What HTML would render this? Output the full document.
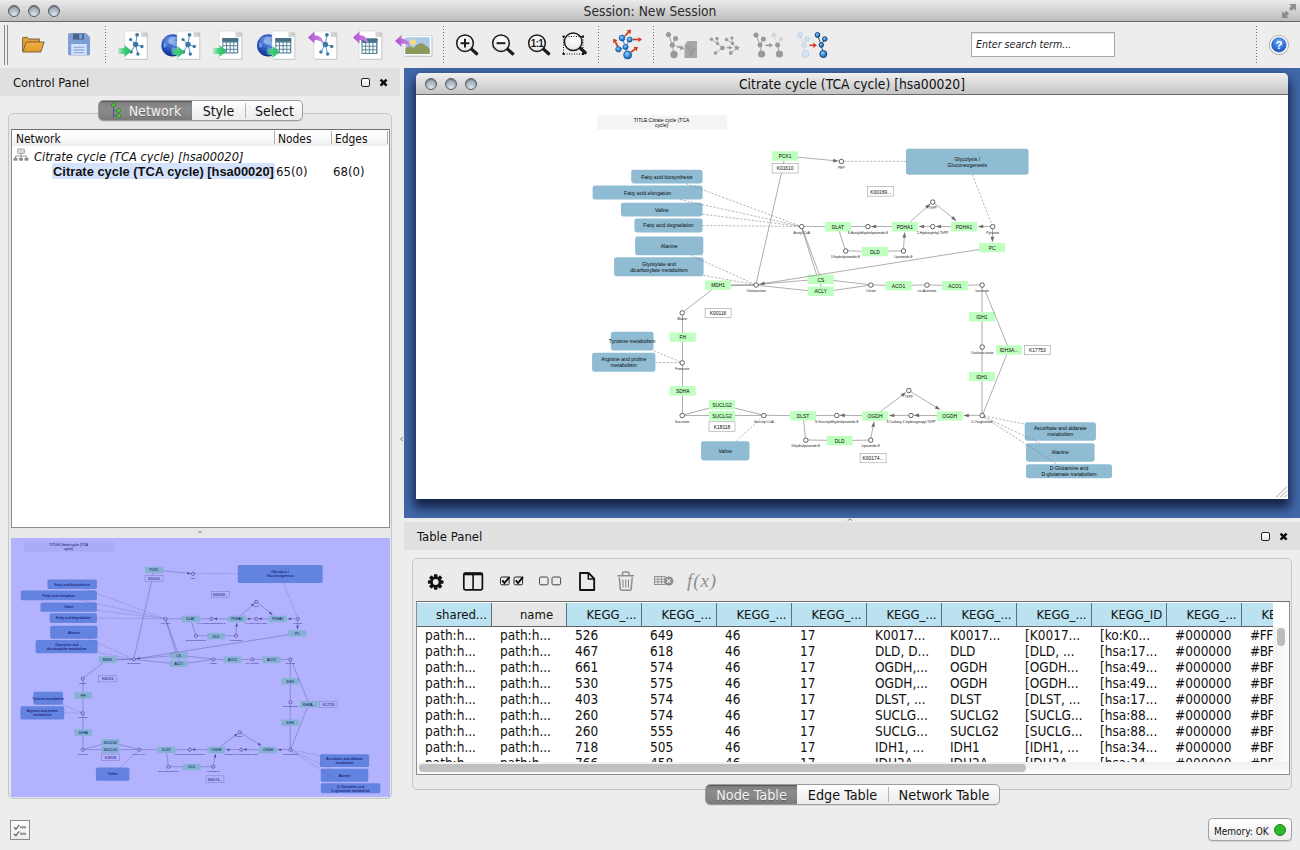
<!DOCTYPE html><html><head><meta charset="utf-8"><title>Session: New Session</title><style>
*{box-sizing:border-box;margin:0;padding:0}
html,body{width:1300px;height:850px;overflow:hidden;background:#ededed;font-family:"DejaVu Sans Condensed","DejaVu Sans","Liberation Sans",sans-serif;font-size:13px;color:#111}
.abs{position:absolute}
#titlebar{left:0;top:0;width:1300px;height:22px;background:linear-gradient(#ebebeb,#d6d6d6 45%,#bcbcbc);border-bottom:1px solid #686868;border-radius:4px 4px 0 0}
#titlebar .t{position:absolute;left:0;width:1300px;top:3px;text-align:center;font-size:13.7px;color:#2a2a2a}
.tl{position:absolute;width:12px;height:12px;border-radius:50%;background:radial-gradient(circle at 50% 90%,#e3e9ee 0%,#b7c2cd 40%,#8a96a4 100%);border:1px solid #565d68;box-shadow:inset 0 1px 1px rgba(60,70,80,.5)}
.band{background:#e0e0e0}
.sepv{position:absolute;width:1px;border-left:1px dotted #777}
.seg{position:absolute;font-size:14px;height:21px;border:1px solid #9c9c9c;border-radius:5px;background:linear-gradient(#ffffff,#f4f4f4 50%,#ececec);box-shadow:0 1px 0 rgba(0,0,0,.08);overflow:hidden}
.seg .it{position:absolute;top:0;height:19px;line-height:20px;text-align:center;font-size:inherit;color:#111}
.seg .sel{background:linear-gradient(#7c7c7c,#8b8b8b 35%,#878787 65%,#7a7a7a);color:#f4f4f4;text-shadow:0 1px 0 rgba(0,0,0,.25);box-shadow:inset 0 1px 1px rgba(0,0,0,.3)}
.seg .dv{position:absolute;top:2px;width:1px;height:15px;background:#b5b5b5}
.pane{position:absolute;border:1px solid #c6c6c6;border-radius:5px;background:#e8e8e8}
.row{position:absolute;font-size:13px;white-space:nowrap;line-height:16px;height:16px}
.hc{position:absolute;top:0;height:24px;line-height:24px;font-size:13px;text-align:center;background:#bae2f0;border-right:1px solid #58737f;padding-left:15px;white-space:nowrap;overflow:hidden}
</style></head><body>
<div id="titlebar" class="abs"><div class="tl" style="left:8px;top:5px"></div><div class="tl" style="left:28px;top:5px"></div><div class="tl" style="left:48px;top:5px"></div><div class="t">Session: New Session</div><svg class="abs" style="left:1281px;top:3px" width="16" height="16" viewBox="0 0 16 16"><g fill="#8e8e8e"><path d="M15 1 L15 7.8 L12.9 5.7 L10.6 8 L8 5.4 L10.3 3.1 L8.2 1 Z"/><path d="M1 15 L1 8.2 L3.1 10.3 L5.4 8 L8 10.6 L5.7 12.9 L7.8 15 Z"/></g></svg></div>
<div class="abs" style="left:4px;top:25px;width:1px;height:40px;background:#8a8a8a"></div><div class="abs" style="left:7px;top:25px;width:1px;height:40px;background:#8a8a8a"></div>
<svg class="abs" style="left:0;top:0" width="1300" height="70" viewBox="0 0 1300 70"><defs><linearGradient id="gg" x1="0" x2="1" y1="0" y2="0"><stop offset="0" stop-color="#3fd07a" stop-opacity="0.25"/><stop offset="0.45" stop-color="#3fcf78"/><stop offset="1" stop-color="#2fb366"/></linearGradient><linearGradient id="pg" x1="0" x2="1" y1="0" y2="0"><stop offset="0" stop-color="#b24fd8"/><stop offset="1" stop-color="#c98ae0"/></linearGradient><radialGradient id="gl" cx="0.4" cy="0.35" r="0.75"><stop offset="0" stop-color="#5b8de0"/><stop offset="0.55" stop-color="#1f4bb4"/><stop offset="1" stop-color="#071e78"/></radialGradient><radialGradient id="lg" cx="0.5" cy="0.35" r="0.7"><stop offset="0" stop-color="#ffffff"/><stop offset="0.7" stop-color="#ececec"/><stop offset="1" stop-color="#c8c8c8"/></radialGradient><radialGradient id="bn" cx="0.4" cy="0.35" r="0.7"><stop offset="0" stop-color="#8fd0ff"/><stop offset="0.6" stop-color="#2f86d6"/><stop offset="1" stop-color="#0f4f9a"/></radialGradient><radialGradient id="hp" cx="0.5" cy="0.3" r="0.8"><stop offset="0" stop-color="#7db4f5"/><stop offset="0.6" stop-color="#2a6fd6"/><stop offset="1" stop-color="#1548a8"/></radialGradient><linearGradient id="fo" x1="0" x2="0" y1="0" y2="1"><stop offset="0" stop-color="#f7b040"/><stop offset="1" stop-color="#e09a2c"/></linearGradient></defs><line x1="105.5" y1="26" x2="105.5" y2="63.5" stroke="#777" stroke-width="1" stroke-dasharray="1 2"/><line x1="443.5" y1="26" x2="443.5" y2="63.5" stroke="#777" stroke-width="1" stroke-dasharray="1 2"/><line x1="598.5" y1="26" x2="598.5" y2="63.5" stroke="#777" stroke-width="1" stroke-dasharray="1 2"/><line x1="653.5" y1="26" x2="653.5" y2="63.5" stroke="#777" stroke-width="1" stroke-dasharray="1 2"/><line x1="1256.5" y1="26" x2="1256.5" y2="63.5" stroke="#777" stroke-width="1" stroke-dasharray="1 2"/><path d="M22.6 51 V38.2 Q22.6 37.4 23.4 37.4 H27.4 L28.6 39 H39.4 V42" fill="#e8a030" stroke="#6a5a40" stroke-width="0.9"/><path d="M22.8 52 L26.2 42 H44.2 L40.8 52 Z" fill="url(#fo)" stroke="#6a5a40" stroke-width="0.9" stroke-linejoin="round"/><path d="M69.5 33.5 H86 L89.6 37.2 V54 Q89.6 55 88.6 55 H69.5 Q68.5 55 68.5 54 V34.5 Q68.5 33.5 69.5 33.5 Z" fill="#7c9fd6" stroke="#6a86b8" stroke-width="0.6"/><rect x="73" y="33.6" width="11" height="6" fill="#4b6288"/><rect x="79.2" y="34.2" width="3" height="4.4" fill="#7c9fd6"/><rect x="71.2" y="44" width="15.6" height="11" fill="#d4e2fc"/><path d="M73.5 47.3 H84.5 M73.5 50 H84.5 M73.5 52.7 H84.5" stroke="#8fb0e2" stroke-width="1.3"/><path d="M125.39999999999999 32.5 H147.9 V59.9 H125.39999999999999 Z" fill="#000" fill-opacity="0.16"/><path d="M124.6 31 H141.1 L147.1 37 V59 H124.6 Z" fill="#fff" stroke="#d0d0d0" stroke-width="0.6"/><path d="M141.1 31 V37 H147.1 Z" fill="#d4d4d4"/><g stroke="#4d9bd6" stroke-width="1"><line x1="135.6" y1="44.5" x2="137.1" y2="34.8"/><line x1="135.6" y1="44.5" x2="130.6" y2="39.5"/><line x1="135.6" y1="44.5" x2="141.9" y2="46.5"/><line x1="135.6" y1="44.5" x2="131.1" y2="52"/><line x1="135.6" y1="44.5" x2="137.9" y2="54"/></g><g fill="#3b79a6"><circle cx="135.6" cy="44.5" r="2.7"/><circle cx="137.1" cy="34.8" r="1.9"/><circle cx="130.6" cy="39.5" r="1.6"/><circle cx="141.9" cy="46.5" r="1.7"/><circle cx="131.1" cy="52" r="1.7"/><circle cx="137.9" cy="54" r="1.7"/></g><path d="M118 48 H124.5 V45 L131.5 51 L124.5 57 V54 H118 Z" fill="url(#gg)"/><circle cx="172.6" cy="45.4" r="11.2" fill="url(#gl)"/><path d="M169.6 37.4 q4 -2 7 0 q-2 2 -1 4 q3 1 3 4 q-3 2 -6 0 q-2 -2 -4 -3 q-1 -3 1 -5z M171.6 47.4 q4 -1 6 2 q0 4 -3 6 q-3 -2 -3 -8z M163.6 42.4 q3 0 3 3 q-1 3 -3 2z" fill="#a8c8f4" fill-opacity="0.55"/><ellipse cx="170.6" cy="39.9" rx="7" ry="4" fill="#fff" fill-opacity="0.13"/><path d="M177.8 32.5 H200.3 V59.9 H177.8 Z" fill="#000" fill-opacity="0.16"/><path d="M177 31 H193.5 L199.5 37 V59 H177 Z" fill="#fff" stroke="#d0d0d0" stroke-width="0.6"/><path d="M193.5 31 V37 H199.5 Z" fill="#d4d4d4"/><g stroke="#4d9bd6" stroke-width="1"><line x1="188" y1="44.5" x2="189.5" y2="34.8"/><line x1="188" y1="44.5" x2="183" y2="39.5"/><line x1="188" y1="44.5" x2="194.3" y2="46.5"/><line x1="188" y1="44.5" x2="183.5" y2="52"/><line x1="188" y1="44.5" x2="190.3" y2="54"/></g><g fill="#3b79a6"><circle cx="188" cy="44.5" r="2.7"/><circle cx="189.5" cy="34.8" r="1.9"/><circle cx="183" cy="39.5" r="1.6"/><circle cx="194.3" cy="46.5" r="1.7"/><circle cx="183.5" cy="52" r="1.7"/><circle cx="190.3" cy="54" r="1.7"/></g><path d="M171 49 H177.5 V46 L184.5 52 L177.5 58 V55 H171 Z" fill="url(#gg)"/><path d="M219.8 32.5 H242.3 V59.9 H219.8 Z" fill="#000" fill-opacity="0.16"/><path d="M219 31 H235.5 L241.5 37 V59 H219 Z" fill="#fff" stroke="#d0d0d0" stroke-width="0.6"/><path d="M235.5 31 V37 H241.5 Z" fill="#d4d4d4"/><rect x="222.3" y="38" width="16" height="15.5" rx="0.8" fill="#56829c"/><rect x="222.3" y="38" width="16" height="3.6" rx="0.8" fill="#4a7088"/><rect x="223.30" y="42.60" width="2.7" height="2.6" fill="#fff"/><rect x="226.95" y="42.60" width="2.7" height="2.6" fill="#fff"/><rect x="230.60" y="42.60" width="2.7" height="2.6" fill="#fff"/><rect x="234.25" y="42.60" width="2.7" height="2.6" fill="#fff"/><rect x="223.30" y="46.20" width="2.7" height="2.6" fill="#fff"/><rect x="226.95" y="46.20" width="2.7" height="2.6" fill="#fff"/><rect x="230.60" y="46.20" width="2.7" height="2.6" fill="#fff"/><rect x="234.25" y="46.20" width="2.7" height="2.6" fill="#fff"/><rect x="223.30" y="49.80" width="2.7" height="2.6" fill="#fff"/><rect x="226.95" y="49.80" width="2.7" height="2.6" fill="#fff"/><rect x="230.60" y="49.80" width="2.7" height="2.6" fill="#fff"/><rect x="234.25" y="49.80" width="2.7" height="2.6" fill="#fff"/><path d="M213 48 H219.5 V45 L226.5 51 L219.5 57 V54 H213 Z" fill="url(#gg)"/><circle cx="268.2" cy="45.4" r="11.2" fill="url(#gl)"/><path d="M265.2 37.4 q4 -2 7 0 q-2 2 -1 4 q3 1 3 4 q-3 2 -6 0 q-2 -2 -4 -3 q-1 -3 1 -5z M267.2 47.4 q4 -1 6 2 q0 4 -3 6 q-3 -2 -3 -8z M259.2 42.4 q3 0 3 3 q-1 3 -3 2z" fill="#a8c8f4" fill-opacity="0.55"/><ellipse cx="266.2" cy="39.9" rx="7" ry="4" fill="#fff" fill-opacity="0.13"/><path d="M272.8 32.5 H295.3 V59.9 H272.8 Z" fill="#000" fill-opacity="0.16"/><path d="M272 31 H288.5 L294.5 37 V59 H272 Z" fill="#fff" stroke="#d0d0d0" stroke-width="0.6"/><path d="M288.5 31 V37 H294.5 Z" fill="#d4d4d4"/><rect x="275.3" y="38" width="16" height="15.5" rx="0.8" fill="#56829c"/><rect x="275.3" y="38" width="16" height="3.6" rx="0.8" fill="#4a7088"/><rect x="276.30" y="42.60" width="2.7" height="2.6" fill="#fff"/><rect x="279.95" y="42.60" width="2.7" height="2.6" fill="#fff"/><rect x="283.60" y="42.60" width="2.7" height="2.6" fill="#fff"/><rect x="287.25" y="42.60" width="2.7" height="2.6" fill="#fff"/><rect x="276.30" y="46.20" width="2.7" height="2.6" fill="#fff"/><rect x="279.95" y="46.20" width="2.7" height="2.6" fill="#fff"/><rect x="283.60" y="46.20" width="2.7" height="2.6" fill="#fff"/><rect x="287.25" y="46.20" width="2.7" height="2.6" fill="#fff"/><rect x="276.30" y="49.80" width="2.7" height="2.6" fill="#fff"/><rect x="279.95" y="49.80" width="2.7" height="2.6" fill="#fff"/><rect x="283.60" y="49.80" width="2.7" height="2.6" fill="#fff"/><rect x="287.25" y="49.80" width="2.7" height="2.6" fill="#fff"/><path d="M266 49 H272.5 V46 L279.5 52 L272.5 58 V55 H266 Z" fill="url(#gg)"/><path d="M314.8 32.5 H337.3 V59.9 H314.8 Z" fill="#000" fill-opacity="0.16"/><path d="M314 31 H330.5 L336.5 37 V59 H314 Z" fill="#fff" stroke="#d0d0d0" stroke-width="0.6"/><path d="M330.5 31 V37 H336.5 Z" fill="#d4d4d4"/><g stroke="#4d9bd6" stroke-width="1"><line x1="325.4" y1="44.5" x2="326.9" y2="34.8"/><line x1="325.4" y1="44.5" x2="320.4" y2="39.5"/><line x1="325.4" y1="44.5" x2="331.7" y2="46.5"/><line x1="325.4" y1="44.5" x2="320.9" y2="52"/><line x1="325.4" y1="44.5" x2="327.7" y2="54"/></g><g fill="#3b79a6"><circle cx="325.4" cy="44.5" r="2.7"/><circle cx="326.9" cy="34.8" r="1.9"/><circle cx="320.4" cy="39.5" r="1.6"/><circle cx="331.7" cy="46.5" r="1.7"/><circle cx="320.9" cy="52" r="1.7"/><circle cx="327.7" cy="54" r="1.7"/></g><path d="M308 37.5 L314.5 31.5 V35.2 C320 34.9 323 38.5 323 44.0 C321 40.5 318 39.9 314.5 40.0 V43.5 Z" fill="url(#pg)"/><path d="M359.8 32.5 H382.3 V59.9 H359.8 Z" fill="#000" fill-opacity="0.16"/><path d="M359 31 H375.5 L381.5 37 V59 H359 Z" fill="#fff" stroke="#d0d0d0" stroke-width="0.6"/><path d="M375.5 31 V37 H381.5 Z" fill="#d4d4d4"/><rect x="361.5" y="38.5" width="16" height="15.5" rx="0.8" fill="#56829c"/><rect x="361.5" y="38.5" width="16" height="3.6" rx="0.8" fill="#4a7088"/><rect x="362.50" y="43.10" width="2.7" height="2.6" fill="#fff"/><rect x="366.15" y="43.10" width="2.7" height="2.6" fill="#fff"/><rect x="369.80" y="43.10" width="2.7" height="2.6" fill="#fff"/><rect x="373.45" y="43.10" width="2.7" height="2.6" fill="#fff"/><rect x="362.50" y="46.70" width="2.7" height="2.6" fill="#fff"/><rect x="366.15" y="46.70" width="2.7" height="2.6" fill="#fff"/><rect x="369.80" y="46.70" width="2.7" height="2.6" fill="#fff"/><rect x="373.45" y="46.70" width="2.7" height="2.6" fill="#fff"/><rect x="362.50" y="50.30" width="2.7" height="2.6" fill="#fff"/><rect x="366.15" y="50.30" width="2.7" height="2.6" fill="#fff"/><rect x="369.80" y="50.30" width="2.7" height="2.6" fill="#fff"/><rect x="373.45" y="50.30" width="2.7" height="2.6" fill="#fff"/><path d="M353 37.5 L359.5 31.5 V35.2 C365 34.9 368 38.5 368 44.0 C366 40.5 363 39.9 359.5 40.0 V43.5 Z" fill="url(#pg)"/><rect x="404.6" y="36.6" width="28" height="20.4" fill="#000" fill-opacity="0.15"/><rect x="403.5" y="35.5" width="28" height="20.4" fill="#fff" stroke="#cfd8e2" stroke-width="0.6"/><rect x="405.3" y="37.3" width="24.4" height="16.8" fill="#a9c9e6"/><circle cx="413" cy="42.3" r="3" fill="#f6d983"/><path d="M405.3 54.1 V48.5 Q409 44.5 413.5 48 Q420 40.5 425 45 Q428 46.5 429.7 49 V54.1 Z" fill="#8c985c"/><path d="M395 41 L401.5 35 V38.7 C407 38.4 410 42 410 47.5 C408 44 405 43.4 401.5 43.5 V47 Z" fill="url(#pg)"/><line x1="471.5" y1="49.1" x2="476.7" y2="53.8" stroke="#1c1c1c" stroke-width="3.2" stroke-linecap="round"/><circle cx="465" cy="43.2" r="8.3" fill="url(#lg)" stroke="#1c1c1c" stroke-width="1.5"/><path d="M460.6 43.2 H469.4 M465 38.8 V47.6" stroke="#1c1c1c" stroke-width="2"/><line x1="507.5" y1="49.1" x2="512.7" y2="53.8" stroke="#1c1c1c" stroke-width="3.2" stroke-linecap="round"/><circle cx="501" cy="43.2" r="8.3" fill="url(#lg)" stroke="#1c1c1c" stroke-width="1.5"/><path d="M496.6 43.2 H505.4" stroke="#1c1c1c" stroke-width="2"/><line x1="543.5" y1="49.1" x2="548.7" y2="53.8" stroke="#1c1c1c" stroke-width="3.2" stroke-linecap="round"/><circle cx="537" cy="43.2" r="8.3" fill="url(#lg)" stroke="#1c1c1c" stroke-width="1.5"/><text x="537" y="47" font-family="'Liberation Sans',sans-serif" font-weight="bold" font-size="10" text-anchor="middle" fill="#1c1c1c" letter-spacing="-0.6">1:1</text><line x1="580.1" y1="48.0" x2="585.3" y2="52.7" stroke="#1c1c1c" stroke-width="3.2" stroke-linecap="round"/><circle cx="573.2" cy="41.8" r="8.8" fill="url(#lg)" stroke="#1c1c1c" stroke-width="1.5"/><rect x="563.5" y="36.5" width="19.5" height="17.5" fill="none" stroke="#111" stroke-width="1" stroke-dasharray="1 1.5"/><rect x="562.5" y="35.5" width="2" height="2" fill="#111"/><rect x="582" y="35.5" width="2" height="2" fill="#111"/><rect x="562.5" y="53" width="2" height="2" fill="#111"/><rect x="582" y="53" width="2" height="2" fill="#111"/><line x1="625" y1="36" x2="628.6" y2="32.1" stroke="#d2341e" stroke-width="1.7"/><polygon points="631,29.5 630.5,33.9 626.6,30.4" fill="#d2341e"/><line x1="633" y1="39.5" x2="638.4" y2="39.5" stroke="#d2341e" stroke-width="1.7"/><polygon points="642,39.5 638.4,42.1 638.4,36.9" fill="#d2341e"/><line x1="618" y1="47" x2="615.2" y2="41.7" stroke="#d2341e" stroke-width="1.7"/><polygon points="613.5,38.5 617.5,40.5 612.9,42.9" fill="#d2341e"/><line x1="631" y1="52" x2="635.1" y2="49.1" stroke="#d2341e" stroke-width="1.7"/><polygon points="638,47 636.6,51.2 633.6,47.0" fill="#d2341e"/><path d="M622 38 L625.5 47 L629.5 39.5 M625.5 47 L618.5 49.5 M625.5 47 L627.5 55" stroke="#2f6fb6" stroke-width="0.9" fill="none"/><circle cx="622" cy="38" r="2.9" fill="url(#bn)" stroke="#174f96" stroke-width="0.7"/><circle cx="629.7" cy="39.5" r="2.6" fill="url(#bn)" stroke="#174f96" stroke-width="0.7"/><circle cx="625.6" cy="47" r="2.6" fill="url(#bn)" stroke="#174f96" stroke-width="0.7"/><circle cx="618.4" cy="49.3" r="2.7" fill="url(#bn)" stroke="#174f96" stroke-width="0.7"/><circle cx="627.6" cy="55" r="4" fill="url(#bn)" stroke="#174f96" stroke-width="0.7"/><g stroke="#9a9a9a" stroke-width="0.9" fill="none"><path d="M668.5 34.5 L672.3 45 L675.5 38.5 M672.3 45 L674 54.5"/></g><circle cx="668.5" cy="34.5" r="2.6" fill="#9a9a9a"/><circle cx="675.6" cy="38.6" r="2.5" fill="#9a9a9a"/><circle cx="672.3" cy="45" r="2.6" fill="#9a9a9a"/><circle cx="674" cy="54.5" r="3.7" fill="#9a9a9a"/><path d="M676.5 46.2 L681 47.5" stroke="#9a9a9a" stroke-width="1.6"/><polygon points="684.5,48.6 679.8,50.3 681,45.3" fill="#9a9a9a"/><path d="M684.5 45 L687.5 41 H697 V58 H684.5 Z" fill="#a6a6a6"/><g fill="none" stroke="#8c8c8c" stroke-width="0.7"><circle cx="688.5" cy="47" r="1.4"/><circle cx="693.5" cy="49.5" r="1.4"/><circle cx="691" cy="54" r="1.4"/><path d="M689.3 48.2 L690.6 52.7 M692.8 50.7 L691.6 52.7"/></g><g stroke="#9a9a9a" stroke-width="0.8" fill="none"><path d="M711.5 39.5 L717.5 43.5 L717 38.5 M717.5 43.5 L722.5 48 L715.5 53 M732.5 43.5 L736.8 48 M732.5 43.5 L726.5 39.5 M732.5 43.5 L732 38 M736.8 48 L730.8 53"/></g><circle cx="711.5" cy="39.3" r="1.7" fill="#9a9a9a"/><circle cx="717" cy="38.5" r="1.7" fill="#9a9a9a"/><circle cx="717.5" cy="43.5" r="1.6" fill="#9a9a9a"/><circle cx="722.5" cy="48" r="2.3" fill="#9a9a9a"/><circle cx="715.5" cy="53" r="1.8" fill="#9a9a9a"/><circle cx="732.5" cy="43.5" r="1.7" fill="#9a9a9a"/><circle cx="730.8" cy="53" r="1.9" fill="#9a9a9a"/><polygon points="726.5,36.9 727.2,38.6 729.0,38.7 727.6,39.9 728.0,41.6 726.5,40.7 725.0,41.6 725.4,39.9 724.0,38.7 725.8,38.6" fill="#9a9a9a"/><polygon points="732.0,35.6 732.6,37.1 734.3,37.3 733.0,38.3 733.4,39.9 732.0,39.1 730.6,39.9 731.0,38.3 729.7,37.3 731.4,37.1" fill="#9a9a9a"/><polygon points="737.0,44.8 737.8,46.8 740.0,47.0 738.4,48.4 738.9,50.6 737.0,49.4 735.1,50.6 735.6,48.4 734.0,47.0 736.2,46.8" fill="#9a9a9a"/><path d="M726.5 47.7 H729.5" stroke="#9a9a9a" stroke-width="1.2"/><polygon points="732.5,47.7 729,45.6 729,49.8" fill="#9a9a9a"/><g stroke="#9a9a9a" stroke-width="0.9" fill="none"><path d="M756 35 L760 45 L763.3 39 M760 45 L761.5 54"/><path d="M777.5 45 L779.5 54"/></g><g stroke="#d4d4d4" stroke-width="0.9" fill="none"><path d="M774 35 L777.5 45 L781 39"/></g><circle cx="756" cy="35" r="2.6" fill="#9a9a9a"/><circle cx="763.4" cy="39" r="2.5" fill="#9a9a9a"/><circle cx="760" cy="45" r="2.5" fill="#9a9a9a"/><circle cx="761.6" cy="54" r="3.6" fill="#9a9a9a"/><circle cx="777.6" cy="45" r="2.5" fill="#9a9a9a"/><circle cx="779.4" cy="54" r="3.6" fill="#9a9a9a"/><circle cx="774" cy="35" r="2.5" fill="#d6d6d6"/><circle cx="781" cy="39" r="2.4" fill="#d6d6d6"/><path d="M765.5 45.3 H770" stroke="#9a9a9a" stroke-width="1.5"/><polygon points="773,45.3 769.3,42.8 769.3,47.8" fill="#9a9a9a"/><g stroke="#c2d6ea" stroke-width="0.9" fill="none"><path d="M800 35 L803.8 45 L807 39 M803.8 45 L805.5 54"/></g><circle cx="800" cy="35" r="2.4" fill="#d5e4f2" stroke="#b4cce4" stroke-width="0.7"/><circle cx="807" cy="39" r="2.3" fill="#d5e4f2" stroke="#b4cce4" stroke-width="0.7"/><circle cx="803.8" cy="45" r="2.3" fill="#d5e4f2" stroke="#b4cce4" stroke-width="0.7"/><circle cx="805.5" cy="54" r="3.5" fill="#d5e4f2" stroke="#b4cce4" stroke-width="0.7"/><path d="M809.5 45.3 H814" stroke="#d2341e" stroke-width="1.5"/><polygon points="817,45.3 813.3,42.7 813.3,47.9" fill="#d2341e"/><g stroke="#1f3f6e" stroke-width="0.9" fill="none"><path d="M817.5 35 L821.3 45 L824.8 39 M821.3 45 L823.3 54"/></g><circle cx="817.5" cy="35" r="2.4" fill="url(#bn)" stroke="#123a6e" stroke-width="0.9"/><circle cx="824.8" cy="39" r="2.3" fill="url(#bn)" stroke="#123a6e" stroke-width="0.9"/><circle cx="821.3" cy="45" r="2.3" fill="url(#bn)" stroke="#123a6e" stroke-width="0.9"/><circle cx="823.3" cy="54" r="3.5" fill="url(#bn)" stroke="#123a6e" stroke-width="0.9"/><circle cx="1278.9" cy="45.6" r="9.6" fill="#000" fill-opacity="0.12"/><circle cx="1278.9" cy="44.9" r="9.6" fill="#fbfbfb" stroke="#a8a8a8" stroke-width="0.9"/><circle cx="1278.9" cy="44.9" r="7.2" fill="url(#hp)" stroke="#1d56b0" stroke-width="0.6"/><text x="1278.9" y="49" font-family="'Liberation Sans',sans-serif" font-weight="bold" font-size="11.5" text-anchor="middle" fill="#fff">?</text></svg>
<div class="abs" style="left:971px;top:32px;width:144px;height:25px;background:#fff;border:1px solid #a9a9a9;box-shadow:inset 0 1px 1px rgba(0,0,0,.12)"></div>
<div class="abs" style="left:976px;top:38px;font-size:10.6px;font-style:italic;color:#222">Enter search term...</div>
<div class="abs band" style="left:0;top:68px;width:400px;height:28px"></div>
<div class="abs" style="left:13px;top:75px;font-size:12.8px">Control Panel</div>
<div class="abs" style="left:361px;top:78px;width:9px;height:9px;border:1px solid #222;border-radius:2px;background:linear-gradient(#fff,#e4e4e4)"></div><svg class="abs" style="left:379px;top:78px" width="9" height="9" viewBox="0 0 9 9"><path d="M1.6 1.6 L7.6 7.6 M7.6 1.6 L1.6 7.6" stroke="#0c0c0c" stroke-width="2.5" stroke-linecap="butt"/></svg>
<div class="pane" style="left:8px;top:113px;width:384px;height:686px"></div>
<div class="seg" style="left:98px;top:100px;width:205px"><div class="it sel" style="left:0;width:93px;padding-left:19px">Network</div><div class="it" style="left:93px;width:53px">Style</div><div class="dv" style="left:146px"></div><div class="it" style="left:147px;width:57px">Select</div><svg class="abs" style="left:11px;top:1px" width="14" height="18" viewBox="0 0 14 18"><path d="M3.5 3 V15.5 M3.5 8.5 H8 M3.5 13.5 H8" stroke="#4a5a8a" stroke-width="1" fill="none"/><g fill="#59b84a" stroke="#2f7d2a" stroke-width="0.7"><circle cx="3.5" cy="3" r="2.1"/><circle cx="8.6" cy="8.5" r="2.1"/><circle cx="8.6" cy="13.6" r="2.1"/></g></svg></div>
<div class="abs" style="left:11px;top:129px;width:379px;height:399px;background:#fff;border:1px solid #8c8c8c;border-top-color:#6f6f6f"></div>
<div class="abs" style="left:12px;top:130px;width:377px;height:16px;background:linear-gradient(#ffffff,#fafafa 50%,#ececec)"></div>
<div class="abs" style="left:274px;top:131px;width:1px;height:13px;background:#b0b0b0"></div>
<div class="abs" style="left:331px;top:131px;width:1px;height:13px;background:#b0b0b0"></div>
<div class="abs" style="left:387px;top:131px;width:1px;height:13px;background:#b0b0b0"></div>
<div class="row" style="left:16px;top:131px;font-size:11.9px">Network</div><div class="row" style="left:278px;top:131px;font-size:11.9px">Nodes</div><div class="row" style="left:335px;top:131px;font-size:11.9px">Edges</div>
<svg class="abs" style="left:13px;top:148px" width="16" height="14" viewBox="0 0 16 14"><rect x="4.5" y="1" width="7" height="4.5" rx="0.8" fill="#d8d8d8" stroke="#9a9a9a" stroke-width="0.8"/><path d="M8 5.5 V8 M2.5 10 V8 H13.5 V10 M8 8 V10" stroke="#9a9a9a" stroke-width="1" fill="none"/><g fill="#8e8e8e"><rect x="0.5" y="9.8" width="4" height="3" rx="0.8"/><rect x="6" y="9.8" width="4" height="3" rx="0.8"/><rect x="11.5" y="9.8" width="4" height="3" rx="0.8"/></g></svg>
<div class="row" style="left:34px;top:149px;font-style:italic;font-size:12.7px">Citrate cycle (TCA cycle) [hsa00020]</div>
<div class="abs" style="left:52px;top:163px;width:223px;height:16px;background:#d4e2fb"></div>
<div class="row" style="left:53px;top:164px;font-weight:bold;font-size:12.9px;font-family:Liberation Sans,sans-serif">Citrate cycle (TCA cycle) [hsa00020]</div>
<div class="row" style="left:276px;top:164px">65(0)</div><div class="row" style="left:333px;top:164px">68(0)</div>
<svg class="abs" style="left:195px;top:529px" width="10" height="6" viewBox="0 0 10 6"><path d="M3 4.2 L5 2.2 L7 4.2" fill="none" stroke="#777" stroke-width="1"/></svg>
<svg class="abs" style="left:11px;top:538px" width="379" height="259" viewBox="0 0 379 259"><rect width="379" height="259" fill="#fff"/><g transform="translate(-400.5,-76.0) scale(0.6923)"><rect x="597.3" y="115.3" width="129.7" height="14.4" rx="1.5" fill="#f4f4f4"/>
<g font-family="'Liberation Sans',sans-serif" text-anchor="middle" fill="#080808">
<text x="661.6" y="121.6" font-size="5">TITLE:Citrate cycle (TCA</text>
<text x="661.6" y="127.4" font-size="5">cycle)</text>
<rect x="631.2" y="169.7" width="71.4" height="13.8" rx="2.4" fill="#8fbcd3"/>
<rect x="592.6" y="185.5" width="110.0" height="14.1" rx="2.4" fill="#8fbcd3"/>
<rect x="621.0" y="202.8" width="81.6" height="13.6" rx="2.4" fill="#8fbcd3"/>
<rect x="634.4" y="218.6" width="68.2" height="13.8" rx="2.4" fill="#8fbcd3"/>
<rect x="635.1" y="236.4" width="68.2" height="18.8" rx="2.4" fill="#8fbcd3"/>
<rect x="614.1" y="257.2" width="89.5" height="19.0" rx="2.4" fill="#8fbcd3"/>
<rect x="906.0" y="148.8" width="122.6" height="25.9" rx="2.4" fill="#8fbcd3"/>
<rect x="610.9" y="331.8" width="42.7" height="18.7" rx="2.4" fill="#8fbcd3"/>
<rect x="592.1" y="352.8" width="63.3" height="19.0" rx="2.4" fill="#8fbcd3"/>
<rect x="701.1" y="441.2" width="48.4" height="19.3" rx="2.4" fill="#8fbcd3"/>
<rect x="1024.7" y="422.2" width="71.2" height="18.5" rx="2.4" fill="#8fbcd3"/>
<rect x="1026.0" y="443.2" width="68.6" height="18.5" rx="2.4" fill="#8fbcd3"/>
<rect x="1026.0" y="464.2" width="86.0" height="14.1" rx="2.4" fill="#8fbcd3"/>
<rect x="772.1" y="151.3" width="26.0" height="9.4" fill="#bfffbf"/>
<rect x="824.9" y="222.0" width="26.0" height="9.4" fill="#bfffbf"/>
<rect x="891.9" y="221.9" width="26.0" height="9.4" fill="#bfffbf"/>
<rect x="951.0" y="221.9" width="26.0" height="9.4" fill="#bfffbf"/>
<rect x="979.1" y="242.9" width="26.0" height="9.4" fill="#bfffbf"/>
<rect x="861.8" y="246.9" width="26.0" height="9.4" fill="#bfffbf"/>
<rect x="807.8" y="274.7" width="26.0" height="9.4" fill="#bfffbf"/>
<rect x="807.8" y="286.6" width="26.0" height="9.4" fill="#bfffbf"/>
<rect x="705.1" y="280.5" width="26.0" height="9.4" fill="#bfffbf"/>
<rect x="885.5" y="281.0" width="26.0" height="9.4" fill="#bfffbf"/>
<rect x="941.8" y="281.0" width="26.0" height="9.4" fill="#bfffbf"/>
<rect x="968.9" y="312.1" width="26.0" height="9.4" fill="#bfffbf"/>
<rect x="996.0" y="345.2" width="26.0" height="9.4" fill="#bfffbf"/>
<rect x="968.9" y="371.8" width="26.0" height="9.4" fill="#bfffbf"/>
<rect x="936.7" y="411.3" width="26.0" height="9.4" fill="#bfffbf"/>
<rect x="862.1" y="411.3" width="26.0" height="9.4" fill="#bfffbf"/>
<rect x="790.0" y="411.1" width="26.0" height="9.4" fill="#bfffbf"/>
<rect x="826.6" y="435.9" width="26.0" height="9.4" fill="#bfffbf"/>
<rect x="709.0" y="400.2" width="26.0" height="9.4" fill="#bfffbf"/>
<rect x="709.0" y="411.1" width="26.0" height="9.4" fill="#bfffbf"/>
<rect x="669.7" y="386.1" width="26.0" height="9.4" fill="#bfffbf"/>
<rect x="669.7" y="332.5" width="26.0" height="9.4" fill="#bfffbf"/>
<rect x="772.1" y="163.6" width="26.0" height="9.4" fill="#fff" stroke="#8a8a8a" stroke-width="0.5"/>
<rect x="867.7" y="186.7" width="26.0" height="9.4" fill="#fff" stroke="#8a8a8a" stroke-width="0.5"/>
<rect x="705.1" y="308.3" width="26.0" height="9.4" fill="#fff" stroke="#8a8a8a" stroke-width="0.5"/>
<rect x="1024.4" y="345.4" width="26.0" height="9.4" fill="#fff" stroke="#8a8a8a" stroke-width="0.5"/>
<rect x="709.0" y="421.8" width="26.0" height="9.4" fill="#fff" stroke="#8a8a8a" stroke-width="0.5"/>
<rect x="860.1" y="453.4" width="26.0" height="9.4" fill="#fff" stroke="#8a8a8a" stroke-width="0.5"/>
<g stroke="#6b6b6b" stroke-width="0.55" fill="none">
<line x1="982.0" y1="287.2" x2="982.0" y2="312.1" stroke="#d4d4d4" stroke-width="2"/>
<line x1="982.0" y1="321.5" x2="982.0" y2="344.5" stroke="#d4d4d4" stroke-width="2"/>
<line x1="982.0" y1="349.1" x2="982.0" y2="371.8" stroke="#d4d4d4" stroke-width="2"/>
<line x1="982.0" y1="381.2" x2="982.0" y2="413.0" stroke="#d4d4d4" stroke-width="2"/>
<line x1="798.1" y1="157.2" x2="834.8" y2="160.7"/>
<line x1="843.5" y1="161.3" x2="906" y2="161.3" stroke-dasharray="2.2 1.6" stroke-width="0.5"/>
<line x1="784.0" y1="160.8" x2="783.5" y2="163.6"/>
<line x1="781.4" y1="173.2" x2="756.3" y2="282.6"/>
<line x1="686.3" y1="183.8" x2="799.0" y2="225.6" stroke-dasharray="2.2 1.6" stroke-width="0.5"/>
<line x1="680.0" y1="199.6" x2="799.0" y2="225.9" stroke-dasharray="2.2 1.6" stroke-width="0.5"/>
<line x1="702.6" y1="214.2" x2="799.0" y2="226.2" stroke-dasharray="2.2 1.6" stroke-width="0.5"/>
<line x1="702.6" y1="225.5" x2="799.0" y2="226.5" stroke-dasharray="2.2 1.6" stroke-width="0.5"/>
<line x1="691.2" y1="255.5" x2="753.8" y2="283.8" stroke-dasharray="2.2 1.6" stroke-width="0.5"/>
<line x1="703.6" y1="275.4" x2="753.5" y2="284.3" stroke-dasharray="2.2 1.6" stroke-width="0.5"/>
<line x1="731.1" y1="284.9" x2="753.6" y2="284.8"/>
<line x1="731.1" y1="285.6" x2="753.6" y2="285.3"/>
<line x1="711.7" y1="289.9" x2="683.8" y2="311.4"/>
<line x1="682.5" y1="315.0" x2="682.5" y2="332.5"/>
<line x1="682.5" y1="341.9" x2="682.5" y2="360.3"/>
<line x1="682.5" y1="364.9" x2="682.5" y2="386.1"/>
<line x1="682.5" y1="395.5" x2="682.5" y2="413.0"/>
<line x1="653.6" y1="350.5" x2="679.9" y2="361.7" stroke-dasharray="2.2 1.6" stroke-width="0.5"/>
<line x1="655.4" y1="362.5" x2="679.7" y2="362.6" stroke-dasharray="2.2 1.6" stroke-width="0.5"/>
<line x1="684.2" y1="414.7" x2="709.0" y2="408.2"/>
<line x1="735.0" y1="408.2" x2="761.4" y2="414.6"/>
<line x1="684.3" y1="415.4" x2="709.0" y2="415.6"/>
<line x1="735.0" y1="415.6" x2="761.3" y2="415.4"/>
<line x1="765.9" y1="415.3" x2="790.0" y2="415.6"/>
<line x1="736.2" y1="441.2" x2="762.2" y2="417.2" stroke-dasharray="2.2 1.6" stroke-width="0.5"/>
<line x1="816.0" y1="415.6" x2="834.3" y2="415.3"/>
<line x1="862.1" y1="415.6" x2="843.2" y2="415.4"/>
<line x1="803.6" y1="420.5" x2="805.4" y2="437.7"/>
<line x1="807.9" y1="440.0" x2="826.6" y2="440.3"/>
<line x1="852.6" y1="440.4" x2="868.2" y2="440.1"/>
<line x1="870.9" y1="437.7" x2="873.4" y2="425.2"/>
<line x1="880.7" y1="411.3" x2="903.1" y2="394.6"/>
<line x1="910.6" y1="391.6" x2="937.1" y2="407.8"/>
<line x1="936.7" y1="415.6" x2="917.5" y2="415.4"/>
<line x1="908.5" y1="415.3" x2="892.7" y2="415.5"/>
<line x1="979.7" y1="415.3" x2="967.3" y2="415.5"/>
<line x1="985.2" y1="291.0" x2="1007.3" y2="345.1"/>
<line x1="1006.7" y1="354.7" x2="983.2" y2="413.3"/>
<line x1="984.2" y1="416.0" x2="1024.7" y2="424.0" stroke-dasharray="2.2 1.6" stroke-width="0.5"/>
<line x1="984.0" y1="416.7" x2="1040.0" y2="443.2" stroke-dasharray="2.2 1.6" stroke-width="0.5"/>
<line x1="983.6" y1="417.2" x2="1057.3" y2="464.2" stroke-dasharray="2.2 1.6" stroke-width="0.5"/>
<line x1="972.3" y1="174.7" x2="991.7" y2="224.2" stroke-dasharray="2.2 1.6" stroke-width="0.5"/>
<line x1="992.5" y1="228.7" x2="992.4" y2="238.3"/>
<line x1="990.2" y1="226.4" x2="981.6" y2="226.5"/>
<line x1="951.0" y1="226.6" x2="939.4" y2="226.5"/>
<line x1="930.2" y1="226.4" x2="922.5" y2="226.5"/>
<line x1="910.2" y1="221.9" x2="927.5" y2="206.4"/>
<line x1="934.4" y1="203.3" x2="953.5" y2="218.4"/>
<line x1="891.9" y1="226.6" x2="874.6" y2="226.4"/>
<line x1="865.4" y1="226.4" x2="850.9" y2="226.6"/>
<line x1="824.9" y1="226.6" x2="803.8" y2="226.4"/>
<line x1="839.3" y1="231.4" x2="844.9" y2="248.6"/>
<line x1="847.8" y1="250.8" x2="861.8" y2="251.2"/>
<line x1="887.8" y1="251.2" x2="901.0" y2="250.8"/>
<line x1="903.5" y1="248.5" x2="904.4" y2="236.0"/>
<line x1="802.0" y1="228.6" x2="816.6" y2="274.7"/>
<line x1="802.4" y1="228.5" x2="819.4" y2="274.7"/>
<line x1="820.6" y1="284.1" x2="821.0" y2="286.6"/>
<line x1="979.1" y1="249.5" x2="763.0" y2="283.6"/>
<line x1="758.1" y1="284.3" x2="807.8" y2="280.2"/>
<line x1="833.8" y1="280.5" x2="868.5" y2="284.5"/>
<line x1="758.1" y1="285.4" x2="807.8" y2="290.6"/>
<line x1="833.8" y1="290.4" x2="868.5" y2="285.4"/>
<line x1="873.0" y1="284.9" x2="885.5" y2="285.3"/>
<line x1="911.5" y1="285.3" x2="924.5" y2="284.9"/>
<line x1="929.1" y1="284.9" x2="941.8" y2="285.3"/>
<line x1="967.8" y1="285.3" x2="979.6" y2="284.9"/>
</g>
<polygon points="838.8,161.1 833.1,162.4 833.4,158.8" fill="#6b6b6b"/>
<polygon points="839.2,415.3 844.8,413.6 844.8,417.2" fill="#6b6b6b"/>
<polygon points="874.2,421.3 874.9,427.1 871.3,426.4" fill="#6b6b6b"/>
<polygon points="906.3,392.2 902.9,397.0 900.7,394.1" fill="#6b6b6b"/>
<polygon points="940.5,409.9 934.8,408.5 936.7,405.4" fill="#6b6b6b"/>
<polygon points="913.5,415.3 919.1,413.6 919.1,417.2" fill="#6b6b6b"/>
<polygon points="888.7,415.6 894.3,413.7 894.3,417.3" fill="#6b6b6b"/>
<polygon points="963.3,415.6 968.9,413.7 968.9,417.3" fill="#6b6b6b"/>
<polygon points="992.4,242.3 990.6,236.7 994.2,236.7" fill="#6b6b6b"/>
<polygon points="977.6,226.6 983.2,224.7 983.2,228.3" fill="#6b6b6b"/>
<polygon points="935.4,226.4 941.0,224.7 941.0,228.3" fill="#6b6b6b"/>
<polygon points="918.5,226.6 924.1,224.7 924.1,228.3" fill="#6b6b6b"/>
<polygon points="930.5,203.7 927.5,208.8 925.1,206.1" fill="#6b6b6b"/>
<polygon points="956.6,220.9 951.1,218.8 953.3,216.0" fill="#6b6b6b"/>
<polygon points="870.6,226.4 876.2,224.7 876.2,228.3" fill="#6b6b6b"/>
<polygon points="904.7,232.0 906.1,237.7 902.5,237.5" fill="#6b6b6b"/>
<polygon points="759.0,284.2 764.3,281.5 764.8,285.1" fill="#6b6b6b"/>
<circle cx="841.4" cy="161.5" r="2.25" fill="#fff" stroke="#111" stroke-width="0.65"/>
<circle cx="801.7" cy="226.6" r="2.25" fill="#fff" stroke="#111" stroke-width="0.65"/>
<circle cx="867.9" cy="226.6" r="2.25" fill="#fff" stroke="#111" stroke-width="0.65"/>
<circle cx="932.7" cy="202.1" r="2.25" fill="#fff" stroke="#111" stroke-width="0.65"/>
<circle cx="932.7" cy="226.6" r="2.25" fill="#fff" stroke="#111" stroke-width="0.65"/>
<circle cx="992.7" cy="226.6" r="2.25" fill="#fff" stroke="#111" stroke-width="0.65"/>
<circle cx="845.7" cy="251.0" r="2.25" fill="#fff" stroke="#111" stroke-width="0.65"/>
<circle cx="903.5" cy="251.0" r="2.25" fill="#fff" stroke="#111" stroke-width="0.65"/>
<circle cx="756.1" cy="285.0" r="2.25" fill="#fff" stroke="#111" stroke-width="0.65"/>
<circle cx="870.9" cy="285.1" r="2.25" fill="#fff" stroke="#111" stroke-width="0.65"/>
<circle cx="927.0" cy="285.1" r="2.25" fill="#fff" stroke="#111" stroke-width="0.65"/>
<circle cx="982.1" cy="285.1" r="2.25" fill="#fff" stroke="#111" stroke-width="0.65"/>
<circle cx="982.2" cy="347.0" r="2.25" fill="#fff" stroke="#111" stroke-width="0.65"/>
<circle cx="982.2" cy="415.5" r="2.25" fill="#fff" stroke="#111" stroke-width="0.65"/>
<circle cx="908.8" cy="390.5" r="2.25" fill="#fff" stroke="#111" stroke-width="0.65"/>
<circle cx="911.0" cy="415.5" r="2.25" fill="#fff" stroke="#111" stroke-width="0.65"/>
<circle cx="836.8" cy="415.5" r="2.25" fill="#fff" stroke="#111" stroke-width="0.65"/>
<circle cx="805.8" cy="440.2" r="2.25" fill="#fff" stroke="#111" stroke-width="0.65"/>
<circle cx="870.7" cy="440.2" r="2.25" fill="#fff" stroke="#111" stroke-width="0.65"/>
<circle cx="763.8" cy="415.5" r="2.25" fill="#fff" stroke="#111" stroke-width="0.65"/>
<circle cx="682.2" cy="415.5" r="2.25" fill="#fff" stroke="#111" stroke-width="0.65"/>
<circle cx="682.2" cy="362.8" r="2.25" fill="#fff" stroke="#111" stroke-width="0.65"/>
<circle cx="682.2" cy="312.9" r="2.25" fill="#fff" stroke="#111" stroke-width="0.65"/>
<text x="841.4" y="168.7" font-size="3.3" fill="#1a1a1a">PEP</text>
<text x="801.7" y="233.8" font-size="3.3" fill="#1a1a1a">Acetyl-CoA</text>
<text x="867.9" y="233.8" font-size="3.3" fill="#1a1a1a">S-Acetyldihydrolipoamide-E</text>
<text x="932.7" y="209.3" font-size="3.3" fill="#1a1a1a">ThPP</text>
<text x="932.7" y="233.8" font-size="3.3" fill="#1a1a1a">2-Hydroxyethyl-ThPP</text>
<text x="992.7" y="233.8" font-size="3.3" fill="#1a1a1a">Pyruvate</text>
<text x="845.7" y="258.2" font-size="3.3" fill="#1a1a1a">Dihydrolipoamide-E</text>
<text x="903.5" y="258.2" font-size="3.3" fill="#1a1a1a">Lipoamide-E</text>
<text x="756.1" y="292.2" font-size="3.3" fill="#1a1a1a">Oxaloacetate</text>
<text x="870.9" y="292.3" font-size="3.3" fill="#1a1a1a">Citrate</text>
<text x="927.0" y="292.3" font-size="3.3" fill="#1a1a1a">cis-Aconitate</text>
<text x="982.1" y="292.3" font-size="3.3" fill="#1a1a1a">Isocitrate</text>
<text x="982.2" y="354.2" font-size="3.3" fill="#1a1a1a">Oxalosuccinate</text>
<text x="982.2" y="422.7" font-size="3.3" fill="#1a1a1a">2-Oxoglutarate</text>
<text x="908.8" y="397.7" font-size="3.3" fill="#1a1a1a">ThPP</text>
<text x="911.0" y="422.7" font-size="3.3" fill="#1a1a1a">3-Carboxy-1-hydroxypropyl-ThPP</text>
<text x="836.8" y="422.7" font-size="3.3" fill="#1a1a1a">S-Succinyldihydrolipoamide-E</text>
<text x="805.8" y="447.4" font-size="3.3" fill="#1a1a1a">Dihydrolipoamide-E</text>
<text x="870.7" y="447.4" font-size="3.3" fill="#1a1a1a">Lipoamide-E</text>
<text x="763.8" y="422.7" font-size="3.3" fill="#1a1a1a">Succinyl-CoA</text>
<text x="682.2" y="422.7" font-size="3.3" fill="#1a1a1a">Succinate</text>
<text x="682.2" y="370.0" font-size="3.3" fill="#1a1a1a">Fumarate</text>
<text x="682.2" y="320.1" font-size="3.3" fill="#1a1a1a">Malate</text>
<text x="785.1" y="158.1" font-size="4.9">PCK1</text>
<text x="837.9" y="228.8" font-size="4.9">DLAT</text>
<text x="904.9" y="228.7" font-size="4.9">PDHA1</text>
<text x="964.0" y="228.7" font-size="4.9">PDHA1</text>
<text x="992.1" y="249.7" font-size="4.9">PC</text>
<text x="874.8" y="253.7" font-size="4.9">DLD</text>
<text x="820.8" y="281.5" font-size="4.9">CS</text>
<text x="820.8" y="293.4" font-size="4.9">ACLY</text>
<text x="718.1" y="287.3" font-size="4.9">MDH1</text>
<text x="898.5" y="287.8" font-size="4.9">ACO1</text>
<text x="954.8" y="287.8" font-size="4.9">ACO1</text>
<text x="981.9" y="318.9" font-size="4.9">IDH1</text>
<text x="1009.0" y="352.0" font-size="4.9">IDH3A...</text>
<text x="981.9" y="378.6" font-size="4.9">IDH1</text>
<text x="949.7" y="418.1" font-size="4.9">OGDH</text>
<text x="875.1" y="418.1" font-size="4.9">OGDH</text>
<text x="803.0" y="417.9" font-size="4.9">DLST</text>
<text x="839.6" y="442.7" font-size="4.9">DLD</text>
<text x="722.0" y="407.0" font-size="4.9">SUCLG2</text>
<text x="722.0" y="417.9" font-size="4.9">SUCLG2</text>
<text x="682.7" y="392.9" font-size="4.9">SDHA</text>
<text x="682.7" y="339.3" font-size="4.9">FH</text>
<text x="785.1" y="170.4" font-size="4.9">K01610</text>
<text x="880.7" y="193.5" font-size="4.9">K00169...</text>
<text x="718.1" y="315.1" font-size="4.9">K00116</text>
<text x="1037.4" y="352.2" font-size="4.9">K17753</text>
<text x="722.0" y="428.6" font-size="4.9">K18118</text>
<text x="873.1" y="460.2" font-size="4.9">K00174...</text>
<text x="666.9" y="178.5" font-size="5.1">Fatty acid biosynthesis</text>
<text x="647.6" y="194.5" font-size="5.1">Fatty acid elongation</text>
<text x="661.8" y="211.6" font-size="5.1">Valine</text>
<text x="668.5" y="227.4" font-size="5.1">Fatty acid degradation</text>
<text x="669.2" y="247.8" font-size="5.1">Alanine</text>
<text x="658.9" y="265.6" font-size="5.1">Glyoxylate and</text>
<text x="658.9" y="271.6" font-size="5.1">dicarboxylate metabolism</text>
<text x="967.3" y="160.7" font-size="5.1">Glycolysis /</text>
<text x="967.3" y="166.7" font-size="5.1">Gluconeogenesis</text>
<text x="632.2" y="343.1" font-size="5.1">Tyrosine metabolism</text>
<text x="623.8" y="361.2" font-size="5.1">Arginine and proline</text>
<text x="623.8" y="367.2" font-size="5.1">metabolism</text>
<text x="725.3" y="452.8" font-size="5.1">Valine</text>
<text x="1060.3" y="430.4" font-size="5.1">Ascorbate and aldarate</text>
<text x="1060.3" y="436.4" font-size="5.1">metabolism</text>
<text x="1060.3" y="454.4" font-size="5.1">Alanine</text>
<text x="1069.0" y="470.2" font-size="5.1">D-Glutamine and</text>
<text x="1069.0" y="476.2" font-size="5.1">D-glutamate metabolism</text>
</g></g><rect width="379" height="259" fill="#0000ff" fill-opacity="0.3"/></svg>
<div class="abs" style="left:10px;top:820px;width:20px;height:20px;border:1px solid #8a8a8a;background:linear-gradient(#fdfdfd,#ececec)"></div><svg class="abs" style="left:10px;top:820px" width="20" height="20" viewBox="0 0 20 20"><path d="M4 7.3 L5.9 9.3 L9.2 4.8 M4 13.8 L5.9 15.8 L9.2 11.3" stroke="#6a6a6a" stroke-width="1.3" fill="none"/><rect x="10" y="6.2" width="6" height="2.2" fill="#9a9a9a"/><rect x="10" y="12.7" width="6" height="2.2" fill="#9a9a9a"/></svg>
<div class="abs" style="left:404px;top:68px;width:896px;height:450px;background:#4168a9"></div>
<div class="abs" style="left:416px;top:73px;width:872px;height:426px;background:#fff;border-radius:5px 5px 0 0;box-shadow:0 7px 11px 2px rgba(8,16,45,.8)"></div>
<div class="abs" style="left:416px;top:73px;width:872px;height:22px;background:linear-gradient(#f0f0f0,#dcdcdc 45%,#c4c4c4);border-bottom:1px solid #6a6a6a;border-radius:5px 5px 0 0"><div class="tl" style="left:9px;top:5px"></div><div class="tl" style="left:29px;top:5px"></div><div class="tl" style="left:49px;top:5px"></div><div style="position:absolute;left:0;top:3px;width:872px;text-align:center;font-size:13.75px;color:#111">Citrate cycle (TCA cycle) [hsa00020]</div></div>
<svg class="abs" style="left:0;top:0;pointer-events:none" width="1300" height="850" viewBox="0 0 1300 850"><rect x="597.3" y="115.3" width="129.7" height="14.4" rx="1.5" fill="#f4f4f4"/>
<g font-family="'Liberation Sans',sans-serif" text-anchor="middle" fill="#080808">
<text x="661.6" y="121.6" font-size="5">TITLE:Citrate cycle (TCA</text>
<text x="661.6" y="127.4" font-size="5">cycle)</text>
<rect x="631.2" y="169.7" width="71.4" height="13.8" rx="2.4" fill="#8fbcd3"/>
<rect x="592.6" y="185.5" width="110.0" height="14.1" rx="2.4" fill="#8fbcd3"/>
<rect x="621.0" y="202.8" width="81.6" height="13.6" rx="2.4" fill="#8fbcd3"/>
<rect x="634.4" y="218.6" width="68.2" height="13.8" rx="2.4" fill="#8fbcd3"/>
<rect x="635.1" y="236.4" width="68.2" height="18.8" rx="2.4" fill="#8fbcd3"/>
<rect x="614.1" y="257.2" width="89.5" height="19.0" rx="2.4" fill="#8fbcd3"/>
<rect x="906.0" y="148.8" width="122.6" height="25.9" rx="2.4" fill="#8fbcd3"/>
<rect x="610.9" y="331.8" width="42.7" height="18.7" rx="2.4" fill="#8fbcd3"/>
<rect x="592.1" y="352.8" width="63.3" height="19.0" rx="2.4" fill="#8fbcd3"/>
<rect x="701.1" y="441.2" width="48.4" height="19.3" rx="2.4" fill="#8fbcd3"/>
<rect x="1024.7" y="422.2" width="71.2" height="18.5" rx="2.4" fill="#8fbcd3"/>
<rect x="1026.0" y="443.2" width="68.6" height="18.5" rx="2.4" fill="#8fbcd3"/>
<rect x="1026.0" y="464.2" width="86.0" height="14.1" rx="2.4" fill="#8fbcd3"/>
<rect x="772.1" y="151.3" width="26.0" height="9.4" fill="#bfffbf"/>
<rect x="824.9" y="222.0" width="26.0" height="9.4" fill="#bfffbf"/>
<rect x="891.9" y="221.9" width="26.0" height="9.4" fill="#bfffbf"/>
<rect x="951.0" y="221.9" width="26.0" height="9.4" fill="#bfffbf"/>
<rect x="979.1" y="242.9" width="26.0" height="9.4" fill="#bfffbf"/>
<rect x="861.8" y="246.9" width="26.0" height="9.4" fill="#bfffbf"/>
<rect x="807.8" y="274.7" width="26.0" height="9.4" fill="#bfffbf"/>
<rect x="807.8" y="286.6" width="26.0" height="9.4" fill="#bfffbf"/>
<rect x="705.1" y="280.5" width="26.0" height="9.4" fill="#bfffbf"/>
<rect x="885.5" y="281.0" width="26.0" height="9.4" fill="#bfffbf"/>
<rect x="941.8" y="281.0" width="26.0" height="9.4" fill="#bfffbf"/>
<rect x="968.9" y="312.1" width="26.0" height="9.4" fill="#bfffbf"/>
<rect x="996.0" y="345.2" width="26.0" height="9.4" fill="#bfffbf"/>
<rect x="968.9" y="371.8" width="26.0" height="9.4" fill="#bfffbf"/>
<rect x="936.7" y="411.3" width="26.0" height="9.4" fill="#bfffbf"/>
<rect x="862.1" y="411.3" width="26.0" height="9.4" fill="#bfffbf"/>
<rect x="790.0" y="411.1" width="26.0" height="9.4" fill="#bfffbf"/>
<rect x="826.6" y="435.9" width="26.0" height="9.4" fill="#bfffbf"/>
<rect x="709.0" y="400.2" width="26.0" height="9.4" fill="#bfffbf"/>
<rect x="709.0" y="411.1" width="26.0" height="9.4" fill="#bfffbf"/>
<rect x="669.7" y="386.1" width="26.0" height="9.4" fill="#bfffbf"/>
<rect x="669.7" y="332.5" width="26.0" height="9.4" fill="#bfffbf"/>
<rect x="772.1" y="163.6" width="26.0" height="9.4" fill="#fff" stroke="#8a8a8a" stroke-width="0.5"/>
<rect x="867.7" y="186.7" width="26.0" height="9.4" fill="#fff" stroke="#8a8a8a" stroke-width="0.5"/>
<rect x="705.1" y="308.3" width="26.0" height="9.4" fill="#fff" stroke="#8a8a8a" stroke-width="0.5"/>
<rect x="1024.4" y="345.4" width="26.0" height="9.4" fill="#fff" stroke="#8a8a8a" stroke-width="0.5"/>
<rect x="709.0" y="421.8" width="26.0" height="9.4" fill="#fff" stroke="#8a8a8a" stroke-width="0.5"/>
<rect x="860.1" y="453.4" width="26.0" height="9.4" fill="#fff" stroke="#8a8a8a" stroke-width="0.5"/>
<g stroke="#6b6b6b" stroke-width="0.55" fill="none">
<line x1="982.0" y1="287.2" x2="982.0" y2="312.1" stroke="#d4d4d4" stroke-width="2"/>
<line x1="982.0" y1="321.5" x2="982.0" y2="344.5" stroke="#d4d4d4" stroke-width="2"/>
<line x1="982.0" y1="349.1" x2="982.0" y2="371.8" stroke="#d4d4d4" stroke-width="2"/>
<line x1="982.0" y1="381.2" x2="982.0" y2="413.0" stroke="#d4d4d4" stroke-width="2"/>
<line x1="798.1" y1="157.2" x2="834.8" y2="160.7"/>
<line x1="843.5" y1="161.3" x2="906" y2="161.3" stroke-dasharray="2.2 1.6" stroke-width="0.5"/>
<line x1="784.0" y1="160.8" x2="783.5" y2="163.6"/>
<line x1="781.4" y1="173.2" x2="756.3" y2="282.6"/>
<line x1="686.3" y1="183.8" x2="799.0" y2="225.6" stroke-dasharray="2.2 1.6" stroke-width="0.5"/>
<line x1="680.0" y1="199.6" x2="799.0" y2="225.9" stroke-dasharray="2.2 1.6" stroke-width="0.5"/>
<line x1="702.6" y1="214.2" x2="799.0" y2="226.2" stroke-dasharray="2.2 1.6" stroke-width="0.5"/>
<line x1="702.6" y1="225.5" x2="799.0" y2="226.5" stroke-dasharray="2.2 1.6" stroke-width="0.5"/>
<line x1="691.2" y1="255.5" x2="753.8" y2="283.8" stroke-dasharray="2.2 1.6" stroke-width="0.5"/>
<line x1="703.6" y1="275.4" x2="753.5" y2="284.3" stroke-dasharray="2.2 1.6" stroke-width="0.5"/>
<line x1="731.1" y1="284.9" x2="753.6" y2="284.8"/>
<line x1="731.1" y1="285.6" x2="753.6" y2="285.3"/>
<line x1="711.7" y1="289.9" x2="683.8" y2="311.4"/>
<line x1="682.5" y1="315.0" x2="682.5" y2="332.5"/>
<line x1="682.5" y1="341.9" x2="682.5" y2="360.3"/>
<line x1="682.5" y1="364.9" x2="682.5" y2="386.1"/>
<line x1="682.5" y1="395.5" x2="682.5" y2="413.0"/>
<line x1="653.6" y1="350.5" x2="679.9" y2="361.7" stroke-dasharray="2.2 1.6" stroke-width="0.5"/>
<line x1="655.4" y1="362.5" x2="679.7" y2="362.6" stroke-dasharray="2.2 1.6" stroke-width="0.5"/>
<line x1="684.2" y1="414.7" x2="709.0" y2="408.2"/>
<line x1="735.0" y1="408.2" x2="761.4" y2="414.6"/>
<line x1="684.3" y1="415.4" x2="709.0" y2="415.6"/>
<line x1="735.0" y1="415.6" x2="761.3" y2="415.4"/>
<line x1="765.9" y1="415.3" x2="790.0" y2="415.6"/>
<line x1="736.2" y1="441.2" x2="762.2" y2="417.2" stroke-dasharray="2.2 1.6" stroke-width="0.5"/>
<line x1="816.0" y1="415.6" x2="834.3" y2="415.3"/>
<line x1="862.1" y1="415.6" x2="843.2" y2="415.4"/>
<line x1="803.6" y1="420.5" x2="805.4" y2="437.7"/>
<line x1="807.9" y1="440.0" x2="826.6" y2="440.3"/>
<line x1="852.6" y1="440.4" x2="868.2" y2="440.1"/>
<line x1="870.9" y1="437.7" x2="873.4" y2="425.2"/>
<line x1="880.7" y1="411.3" x2="903.1" y2="394.6"/>
<line x1="910.6" y1="391.6" x2="937.1" y2="407.8"/>
<line x1="936.7" y1="415.6" x2="917.5" y2="415.4"/>
<line x1="908.5" y1="415.3" x2="892.7" y2="415.5"/>
<line x1="979.7" y1="415.3" x2="967.3" y2="415.5"/>
<line x1="985.2" y1="291.0" x2="1007.3" y2="345.1"/>
<line x1="1006.7" y1="354.7" x2="983.2" y2="413.3"/>
<line x1="984.2" y1="416.0" x2="1024.7" y2="424.0" stroke-dasharray="2.2 1.6" stroke-width="0.5"/>
<line x1="984.0" y1="416.7" x2="1040.0" y2="443.2" stroke-dasharray="2.2 1.6" stroke-width="0.5"/>
<line x1="983.6" y1="417.2" x2="1057.3" y2="464.2" stroke-dasharray="2.2 1.6" stroke-width="0.5"/>
<line x1="972.3" y1="174.7" x2="991.7" y2="224.2" stroke-dasharray="2.2 1.6" stroke-width="0.5"/>
<line x1="992.5" y1="228.7" x2="992.4" y2="238.3"/>
<line x1="990.2" y1="226.4" x2="981.6" y2="226.5"/>
<line x1="951.0" y1="226.6" x2="939.4" y2="226.5"/>
<line x1="930.2" y1="226.4" x2="922.5" y2="226.5"/>
<line x1="910.2" y1="221.9" x2="927.5" y2="206.4"/>
<line x1="934.4" y1="203.3" x2="953.5" y2="218.4"/>
<line x1="891.9" y1="226.6" x2="874.6" y2="226.4"/>
<line x1="865.4" y1="226.4" x2="850.9" y2="226.6"/>
<line x1="824.9" y1="226.6" x2="803.8" y2="226.4"/>
<line x1="839.3" y1="231.4" x2="844.9" y2="248.6"/>
<line x1="847.8" y1="250.8" x2="861.8" y2="251.2"/>
<line x1="887.8" y1="251.2" x2="901.0" y2="250.8"/>
<line x1="903.5" y1="248.5" x2="904.4" y2="236.0"/>
<line x1="802.0" y1="228.6" x2="816.6" y2="274.7"/>
<line x1="802.4" y1="228.5" x2="819.4" y2="274.7"/>
<line x1="820.6" y1="284.1" x2="821.0" y2="286.6"/>
<line x1="979.1" y1="249.5" x2="763.0" y2="283.6"/>
<line x1="758.1" y1="284.3" x2="807.8" y2="280.2"/>
<line x1="833.8" y1="280.5" x2="868.5" y2="284.5"/>
<line x1="758.1" y1="285.4" x2="807.8" y2="290.6"/>
<line x1="833.8" y1="290.4" x2="868.5" y2="285.4"/>
<line x1="873.0" y1="284.9" x2="885.5" y2="285.3"/>
<line x1="911.5" y1="285.3" x2="924.5" y2="284.9"/>
<line x1="929.1" y1="284.9" x2="941.8" y2="285.3"/>
<line x1="967.8" y1="285.3" x2="979.6" y2="284.9"/>
</g>
<polygon points="838.8,161.1 833.1,162.4 833.4,158.8" fill="#6b6b6b"/>
<polygon points="839.2,415.3 844.8,413.6 844.8,417.2" fill="#6b6b6b"/>
<polygon points="874.2,421.3 874.9,427.1 871.3,426.4" fill="#6b6b6b"/>
<polygon points="906.3,392.2 902.9,397.0 900.7,394.1" fill="#6b6b6b"/>
<polygon points="940.5,409.9 934.8,408.5 936.7,405.4" fill="#6b6b6b"/>
<polygon points="913.5,415.3 919.1,413.6 919.1,417.2" fill="#6b6b6b"/>
<polygon points="888.7,415.6 894.3,413.7 894.3,417.3" fill="#6b6b6b"/>
<polygon points="963.3,415.6 968.9,413.7 968.9,417.3" fill="#6b6b6b"/>
<polygon points="992.4,242.3 990.6,236.7 994.2,236.7" fill="#6b6b6b"/>
<polygon points="977.6,226.6 983.2,224.7 983.2,228.3" fill="#6b6b6b"/>
<polygon points="935.4,226.4 941.0,224.7 941.0,228.3" fill="#6b6b6b"/>
<polygon points="918.5,226.6 924.1,224.7 924.1,228.3" fill="#6b6b6b"/>
<polygon points="930.5,203.7 927.5,208.8 925.1,206.1" fill="#6b6b6b"/>
<polygon points="956.6,220.9 951.1,218.8 953.3,216.0" fill="#6b6b6b"/>
<polygon points="870.6,226.4 876.2,224.7 876.2,228.3" fill="#6b6b6b"/>
<polygon points="904.7,232.0 906.1,237.7 902.5,237.5" fill="#6b6b6b"/>
<polygon points="759.0,284.2 764.3,281.5 764.8,285.1" fill="#6b6b6b"/>
<circle cx="841.4" cy="161.5" r="2.25" fill="#fff" stroke="#111" stroke-width="0.65"/>
<circle cx="801.7" cy="226.6" r="2.25" fill="#fff" stroke="#111" stroke-width="0.65"/>
<circle cx="867.9" cy="226.6" r="2.25" fill="#fff" stroke="#111" stroke-width="0.65"/>
<circle cx="932.7" cy="202.1" r="2.25" fill="#fff" stroke="#111" stroke-width="0.65"/>
<circle cx="932.7" cy="226.6" r="2.25" fill="#fff" stroke="#111" stroke-width="0.65"/>
<circle cx="992.7" cy="226.6" r="2.25" fill="#fff" stroke="#111" stroke-width="0.65"/>
<circle cx="845.7" cy="251.0" r="2.25" fill="#fff" stroke="#111" stroke-width="0.65"/>
<circle cx="903.5" cy="251.0" r="2.25" fill="#fff" stroke="#111" stroke-width="0.65"/>
<circle cx="756.1" cy="285.0" r="2.25" fill="#fff" stroke="#111" stroke-width="0.65"/>
<circle cx="870.9" cy="285.1" r="2.25" fill="#fff" stroke="#111" stroke-width="0.65"/>
<circle cx="927.0" cy="285.1" r="2.25" fill="#fff" stroke="#111" stroke-width="0.65"/>
<circle cx="982.1" cy="285.1" r="2.25" fill="#fff" stroke="#111" stroke-width="0.65"/>
<circle cx="982.2" cy="347.0" r="2.25" fill="#fff" stroke="#111" stroke-width="0.65"/>
<circle cx="982.2" cy="415.5" r="2.25" fill="#fff" stroke="#111" stroke-width="0.65"/>
<circle cx="908.8" cy="390.5" r="2.25" fill="#fff" stroke="#111" stroke-width="0.65"/>
<circle cx="911.0" cy="415.5" r="2.25" fill="#fff" stroke="#111" stroke-width="0.65"/>
<circle cx="836.8" cy="415.5" r="2.25" fill="#fff" stroke="#111" stroke-width="0.65"/>
<circle cx="805.8" cy="440.2" r="2.25" fill="#fff" stroke="#111" stroke-width="0.65"/>
<circle cx="870.7" cy="440.2" r="2.25" fill="#fff" stroke="#111" stroke-width="0.65"/>
<circle cx="763.8" cy="415.5" r="2.25" fill="#fff" stroke="#111" stroke-width="0.65"/>
<circle cx="682.2" cy="415.5" r="2.25" fill="#fff" stroke="#111" stroke-width="0.65"/>
<circle cx="682.2" cy="362.8" r="2.25" fill="#fff" stroke="#111" stroke-width="0.65"/>
<circle cx="682.2" cy="312.9" r="2.25" fill="#fff" stroke="#111" stroke-width="0.65"/>
<text x="841.4" y="168.7" font-size="3.3" fill="#1a1a1a">PEP</text>
<text x="801.7" y="233.8" font-size="3.3" fill="#1a1a1a">Acetyl-CoA</text>
<text x="867.9" y="233.8" font-size="3.3" fill="#1a1a1a">S-Acetyldihydrolipoamide-E</text>
<text x="932.7" y="209.3" font-size="3.3" fill="#1a1a1a">ThPP</text>
<text x="932.7" y="233.8" font-size="3.3" fill="#1a1a1a">2-Hydroxyethyl-ThPP</text>
<text x="992.7" y="233.8" font-size="3.3" fill="#1a1a1a">Pyruvate</text>
<text x="845.7" y="258.2" font-size="3.3" fill="#1a1a1a">Dihydrolipoamide-E</text>
<text x="903.5" y="258.2" font-size="3.3" fill="#1a1a1a">Lipoamide-E</text>
<text x="756.1" y="292.2" font-size="3.3" fill="#1a1a1a">Oxaloacetate</text>
<text x="870.9" y="292.3" font-size="3.3" fill="#1a1a1a">Citrate</text>
<text x="927.0" y="292.3" font-size="3.3" fill="#1a1a1a">cis-Aconitate</text>
<text x="982.1" y="292.3" font-size="3.3" fill="#1a1a1a">Isocitrate</text>
<text x="982.2" y="354.2" font-size="3.3" fill="#1a1a1a">Oxalosuccinate</text>
<text x="982.2" y="422.7" font-size="3.3" fill="#1a1a1a">2-Oxoglutarate</text>
<text x="908.8" y="397.7" font-size="3.3" fill="#1a1a1a">ThPP</text>
<text x="911.0" y="422.7" font-size="3.3" fill="#1a1a1a">3-Carboxy-1-hydroxypropyl-ThPP</text>
<text x="836.8" y="422.7" font-size="3.3" fill="#1a1a1a">S-Succinyldihydrolipoamide-E</text>
<text x="805.8" y="447.4" font-size="3.3" fill="#1a1a1a">Dihydrolipoamide-E</text>
<text x="870.7" y="447.4" font-size="3.3" fill="#1a1a1a">Lipoamide-E</text>
<text x="763.8" y="422.7" font-size="3.3" fill="#1a1a1a">Succinyl-CoA</text>
<text x="682.2" y="422.7" font-size="3.3" fill="#1a1a1a">Succinate</text>
<text x="682.2" y="370.0" font-size="3.3" fill="#1a1a1a">Fumarate</text>
<text x="682.2" y="320.1" font-size="3.3" fill="#1a1a1a">Malate</text>
<text x="785.1" y="158.1" font-size="4.9">PCK1</text>
<text x="837.9" y="228.8" font-size="4.9">DLAT</text>
<text x="904.9" y="228.7" font-size="4.9">PDHA1</text>
<text x="964.0" y="228.7" font-size="4.9">PDHA1</text>
<text x="992.1" y="249.7" font-size="4.9">PC</text>
<text x="874.8" y="253.7" font-size="4.9">DLD</text>
<text x="820.8" y="281.5" font-size="4.9">CS</text>
<text x="820.8" y="293.4" font-size="4.9">ACLY</text>
<text x="718.1" y="287.3" font-size="4.9">MDH1</text>
<text x="898.5" y="287.8" font-size="4.9">ACO1</text>
<text x="954.8" y="287.8" font-size="4.9">ACO1</text>
<text x="981.9" y="318.9" font-size="4.9">IDH1</text>
<text x="1009.0" y="352.0" font-size="4.9">IDH3A...</text>
<text x="981.9" y="378.6" font-size="4.9">IDH1</text>
<text x="949.7" y="418.1" font-size="4.9">OGDH</text>
<text x="875.1" y="418.1" font-size="4.9">OGDH</text>
<text x="803.0" y="417.9" font-size="4.9">DLST</text>
<text x="839.6" y="442.7" font-size="4.9">DLD</text>
<text x="722.0" y="407.0" font-size="4.9">SUCLG2</text>
<text x="722.0" y="417.9" font-size="4.9">SUCLG2</text>
<text x="682.7" y="392.9" font-size="4.9">SDHA</text>
<text x="682.7" y="339.3" font-size="4.9">FH</text>
<text x="785.1" y="170.4" font-size="4.9">K01610</text>
<text x="880.7" y="193.5" font-size="4.9">K00169...</text>
<text x="718.1" y="315.1" font-size="4.9">K00116</text>
<text x="1037.4" y="352.2" font-size="4.9">K17753</text>
<text x="722.0" y="428.6" font-size="4.9">K18118</text>
<text x="873.1" y="460.2" font-size="4.9">K00174...</text>
<text x="666.9" y="178.5" font-size="5.1">Fatty acid biosynthesis</text>
<text x="647.6" y="194.5" font-size="5.1">Fatty acid elongation</text>
<text x="661.8" y="211.6" font-size="5.1">Valine</text>
<text x="668.5" y="227.4" font-size="5.1">Fatty acid degradation</text>
<text x="669.2" y="247.8" font-size="5.1">Alanine</text>
<text x="658.9" y="265.6" font-size="5.1">Glyoxylate and</text>
<text x="658.9" y="271.6" font-size="5.1">dicarboxylate metabolism</text>
<text x="967.3" y="160.7" font-size="5.1">Glycolysis /</text>
<text x="967.3" y="166.7" font-size="5.1">Gluconeogenesis</text>
<text x="632.2" y="343.1" font-size="5.1">Tyrosine metabolism</text>
<text x="623.8" y="361.2" font-size="5.1">Arginine and proline</text>
<text x="623.8" y="367.2" font-size="5.1">metabolism</text>
<text x="725.3" y="452.8" font-size="5.1">Valine</text>
<text x="1060.3" y="430.4" font-size="5.1">Ascorbate and aldarate</text>
<text x="1060.3" y="436.4" font-size="5.1">metabolism</text>
<text x="1060.3" y="454.4" font-size="5.1">Alanine</text>
<text x="1069.0" y="470.2" font-size="5.1">D-Glutamine and</text>
<text x="1069.0" y="476.2" font-size="5.1">D-glutamate metabolism</text>
</g><g stroke="#858585" stroke-width="0.8"><line x1="1276" y1="497.5" x2="1287" y2="486.5"/><line x1="1280" y1="497.5" x2="1287" y2="490.5"/><line x1="1284" y1="497.5" x2="1287" y2="494.5"/></g></svg>
<svg class="abs" style="left:845px;top:517px" width="10" height="5" viewBox="0 0 10 5"><path d="M3 3.7 L5 1.7 L7 3.7" fill="none" stroke="#777" stroke-width="1"/></svg>
<svg class="abs" style="left:399px;top:434px" width="5" height="10" viewBox="0 0 5 10"><path d="M3.7 3 L1.7 5 L3.7 7" fill="none" stroke="#777" stroke-width="1"/></svg>
<div class="abs band" style="left:404px;top:522px;width:896px;height:28px"></div>
<div class="abs" style="left:417px;top:529px;font-size:13px">Table Panel</div>
<div class="abs" style="left:1261px;top:532px;width:9px;height:9px;border:1px solid #222;border-radius:2px;background:linear-gradient(#fff,#e4e4e4)"></div><svg class="abs" style="left:1279px;top:532px" width="9" height="9" viewBox="0 0 9 9"><path d="M1.6 1.6 L7.6 7.6 M7.6 1.6 L1.6 7.6" stroke="#0c0c0c" stroke-width="2.5" stroke-linecap="butt"/></svg>
<div class="pane" style="left:412px;top:558px;width:880px;height:232px;background:#ebebeb"></div>
<svg class="abs" style="left:420px;top:565px" width="310" height="32" viewBox="420 565 310 32"><g fill="#111"><rect x="433.9" y="574.2" width="3.6" height="4" rx="0.8" transform="rotate(0 435.7 582)"/><rect x="433.9" y="574.2" width="3.6" height="4" rx="0.8" transform="rotate(45 435.7 582)"/><rect x="433.9" y="574.2" width="3.6" height="4" rx="0.8" transform="rotate(90 435.7 582)"/><rect x="433.9" y="574.2" width="3.6" height="4" rx="0.8" transform="rotate(135 435.7 582)"/><rect x="433.9" y="574.2" width="3.6" height="4" rx="0.8" transform="rotate(180 435.7 582)"/><rect x="433.9" y="574.2" width="3.6" height="4" rx="0.8" transform="rotate(225 435.7 582)"/><rect x="433.9" y="574.2" width="3.6" height="4" rx="0.8" transform="rotate(270 435.7 582)"/><rect x="433.9" y="574.2" width="3.6" height="4" rx="0.8" transform="rotate(315 435.7 582)"/><circle cx="435.7" cy="582" r="5.6"/></g><circle cx="435.7" cy="582" r="2.9" fill="#ededed"/><rect x="463.8" y="573.2" width="18.6" height="16.6" rx="1.6" fill="none" stroke="#111" stroke-width="1.7"/><path d="M463.8 574 H482.4" stroke="#111" stroke-width="2.6"/><path d="M473.1 573 V590" stroke="#111" stroke-width="1.6"/><rect x="500.5" y="577" width="8.6" height="7.8" rx="1.4" fill="none" stroke="#222" stroke-width="1"/><path d="M502.3 580.4 L504.5 583 L509.5 576.8" fill="none" stroke="#0a0a0a" stroke-width="1.9"/><rect x="514" y="577" width="8.6" height="7.8" rx="1.4" fill="none" stroke="#222" stroke-width="1"/><path d="M515.8 580.4 L518 583 L523 576.8" fill="none" stroke="#0a0a0a" stroke-width="1.9"/><rect x="539.5" y="577" width="8.6" height="7.8" rx="1.4" fill="none" stroke="#333" stroke-width="0.9"/><rect x="552" y="577" width="8.6" height="7.8" rx="1.4" fill="none" stroke="#333" stroke-width="0.9"/><path d="M580 573 H588.5 L594.2 578.7 V590 H580 Z" fill="none" stroke="#111" stroke-width="1.8" stroke-linejoin="round"/><path d="M588.3 573.3 V579 H594" fill="none" stroke="#111" stroke-width="1.5"/><g stroke="#8c8c8c" fill="none" stroke-width="1.5"><path d="M617.5 575.8 H634 M622.5 575.5 V573.2 Q622.5 572 623.7 572 H627.8 Q629 572 629 573.2 V575.5"/><path d="M619.3 577.5 L620.3 589 Q620.4 590.3 621.7 590.3 H629.8 Q631.1 590.3 631.2 589 L632.2 577.5"/><path d="M623 579.5 V587.5 M625.75 579.5 V587.5 M628.5 579.5 V587.5" stroke-width="1.1"/></g><g stroke="#8c8c8c" fill="none" stroke-width="0.9"><rect x="654.5" y="576.5" width="10.5" height="8"/><path d="M654.5 579.2 H665 M654.5 581.8 H665 M658 576.5 V584.5 M661.5 576.5 V584.5"/></g><circle cx="668.8" cy="581" r="4.6" fill="#8c8c8c"/><path d="M666.8 579.2 L670.4 582.8 M670.4 579.2 L666.8 582.8" stroke="#ededed" stroke-width="1.2"/><text x="687" y="587" font-family="'Liberation Serif','DejaVu Serif',serif" font-style="italic" font-size="19" fill="#8e8e8e" letter-spacing="0.9">f(x)</text></svg>
<div class="abs" style="left:416px;top:601px;width:874px;height:174px;background:#fff;border:1px solid #8e8e8e;border-top-color:#6f6f6f"></div>
<div class="abs" style="left:417px;top:603px;width:856px;height:24px;overflow:hidden;border-bottom:1px solid #5f5f5f">
<div class="hc" style="left:0px;width:75px">shared...</div>
<div class="hc" style="left:75px;width:75px;background:#e6e6e6">name</div>
<div class="hc" style="left:150px;width:75px">KEGG_...</div>
<div class="hc" style="left:225px;width:75px">KEGG_...</div>
<div class="hc" style="left:300px;width:75px">KEGG_...</div>
<div class="hc" style="left:375px;width:75px">KEGG_...</div>
<div class="hc" style="left:450px;width:75px">KEGG_...</div>
<div class="hc" style="left:525px;width:75px">KEGG_...</div>
<div class="hc" style="left:600px;width:75px">KEGG_...</div>
<div class="hc" style="left:675px;width:75px">KEGG_ID</div>
<div class="hc" style="left:750px;width:75px">KEGG_...</div>
<div class="hc" style="left:825px;width:75px">KEGG_...</div>
</div>
<div class="abs" style="left:417px;top:627px;width:856px;height:135px;overflow:hidden">
<div class="row" style="left:8px;top:0px;font-size:13.5px">path:h...</div>
<div class="row" style="left:83px;top:0px;font-size:13.5px">path:h...</div>
<div class="row" style="left:158px;top:0px;font-size:13.5px">526</div>
<div class="row" style="left:233px;top:0px;font-size:13.5px">649</div>
<div class="row" style="left:308px;top:0px;font-size:13.5px">46</div>
<div class="row" style="left:383px;top:0px;font-size:13.5px">17</div>
<div class="row" style="left:458px;top:0px;font-size:13.5px">K0017...</div>
<div class="row" style="left:533px;top:0px;font-size:13.5px">K0017...</div>
<div class="row" style="left:608px;top:0px;font-size:13.5px">[K0017...</div>
<div class="row" style="left:683px;top:0px;font-size:13.5px">[ko:K0...</div>
<div class="row" style="left:758px;top:0px;font-size:13.5px">#000000</div>
<div class="row" style="left:833px;top:0px;font-size:13.5px;letter-spacing:-0.5px">#FFFFFF</div>
<div class="row" style="left:8px;top:16px;font-size:13.5px">path:h...</div>
<div class="row" style="left:83px;top:16px;font-size:13.5px">path:h...</div>
<div class="row" style="left:158px;top:16px;font-size:13.5px">467</div>
<div class="row" style="left:233px;top:16px;font-size:13.5px">618</div>
<div class="row" style="left:308px;top:16px;font-size:13.5px">46</div>
<div class="row" style="left:383px;top:16px;font-size:13.5px">17</div>
<div class="row" style="left:458px;top:16px;font-size:13.5px">DLD, D...</div>
<div class="row" style="left:533px;top:16px;font-size:13.5px">DLD</div>
<div class="row" style="left:608px;top:16px;font-size:13.5px">[DLD, ...</div>
<div class="row" style="left:683px;top:16px;font-size:13.5px">[hsa:17...</div>
<div class="row" style="left:758px;top:16px;font-size:13.5px">#000000</div>
<div class="row" style="left:833px;top:16px;font-size:13.5px;letter-spacing:-0.5px">#BFFFBF</div>
<div class="row" style="left:8px;top:32px;font-size:13.5px">path:h...</div>
<div class="row" style="left:83px;top:32px;font-size:13.5px">path:h...</div>
<div class="row" style="left:158px;top:32px;font-size:13.5px">661</div>
<div class="row" style="left:233px;top:32px;font-size:13.5px">574</div>
<div class="row" style="left:308px;top:32px;font-size:13.5px">46</div>
<div class="row" style="left:383px;top:32px;font-size:13.5px">17</div>
<div class="row" style="left:458px;top:32px;font-size:13.5px">OGDH,...</div>
<div class="row" style="left:533px;top:32px;font-size:13.5px">OGDH</div>
<div class="row" style="left:608px;top:32px;font-size:13.5px">[OGDH...</div>
<div class="row" style="left:683px;top:32px;font-size:13.5px">[hsa:49...</div>
<div class="row" style="left:758px;top:32px;font-size:13.5px">#000000</div>
<div class="row" style="left:833px;top:32px;font-size:13.5px;letter-spacing:-0.5px">#BFFFBF</div>
<div class="row" style="left:8px;top:48px;font-size:13.5px">path:h...</div>
<div class="row" style="left:83px;top:48px;font-size:13.5px">path:h...</div>
<div class="row" style="left:158px;top:48px;font-size:13.5px">530</div>
<div class="row" style="left:233px;top:48px;font-size:13.5px">575</div>
<div class="row" style="left:308px;top:48px;font-size:13.5px">46</div>
<div class="row" style="left:383px;top:48px;font-size:13.5px">17</div>
<div class="row" style="left:458px;top:48px;font-size:13.5px">OGDH,...</div>
<div class="row" style="left:533px;top:48px;font-size:13.5px">OGDH</div>
<div class="row" style="left:608px;top:48px;font-size:13.5px">[OGDH...</div>
<div class="row" style="left:683px;top:48px;font-size:13.5px">[hsa:49...</div>
<div class="row" style="left:758px;top:48px;font-size:13.5px">#000000</div>
<div class="row" style="left:833px;top:48px;font-size:13.5px;letter-spacing:-0.5px">#BFFFBF</div>
<div class="row" style="left:8px;top:64px;font-size:13.5px">path:h...</div>
<div class="row" style="left:83px;top:64px;font-size:13.5px">path:h...</div>
<div class="row" style="left:158px;top:64px;font-size:13.5px">403</div>
<div class="row" style="left:233px;top:64px;font-size:13.5px">574</div>
<div class="row" style="left:308px;top:64px;font-size:13.5px">46</div>
<div class="row" style="left:383px;top:64px;font-size:13.5px">17</div>
<div class="row" style="left:458px;top:64px;font-size:13.5px">DLST, ...</div>
<div class="row" style="left:533px;top:64px;font-size:13.5px">DLST</div>
<div class="row" style="left:608px;top:64px;font-size:13.5px">[DLST, ...</div>
<div class="row" style="left:683px;top:64px;font-size:13.5px">[hsa:17...</div>
<div class="row" style="left:758px;top:64px;font-size:13.5px">#000000</div>
<div class="row" style="left:833px;top:64px;font-size:13.5px;letter-spacing:-0.5px">#BFFFBF</div>
<div class="row" style="left:8px;top:80px;font-size:13.5px">path:h...</div>
<div class="row" style="left:83px;top:80px;font-size:13.5px">path:h...</div>
<div class="row" style="left:158px;top:80px;font-size:13.5px">260</div>
<div class="row" style="left:233px;top:80px;font-size:13.5px">574</div>
<div class="row" style="left:308px;top:80px;font-size:13.5px">46</div>
<div class="row" style="left:383px;top:80px;font-size:13.5px">17</div>
<div class="row" style="left:458px;top:80px;font-size:13.5px">SUCLG...</div>
<div class="row" style="left:533px;top:80px;font-size:13.5px">SUCLG2</div>
<div class="row" style="left:608px;top:80px;font-size:13.5px">[SUCLG...</div>
<div class="row" style="left:683px;top:80px;font-size:13.5px">[hsa:88...</div>
<div class="row" style="left:758px;top:80px;font-size:13.5px">#000000</div>
<div class="row" style="left:833px;top:80px;font-size:13.5px;letter-spacing:-0.5px">#BFFFBF</div>
<div class="row" style="left:8px;top:96px;font-size:13.5px">path:h...</div>
<div class="row" style="left:83px;top:96px;font-size:13.5px">path:h...</div>
<div class="row" style="left:158px;top:96px;font-size:13.5px">260</div>
<div class="row" style="left:233px;top:96px;font-size:13.5px">555</div>
<div class="row" style="left:308px;top:96px;font-size:13.5px">46</div>
<div class="row" style="left:383px;top:96px;font-size:13.5px">17</div>
<div class="row" style="left:458px;top:96px;font-size:13.5px">SUCLG...</div>
<div class="row" style="left:533px;top:96px;font-size:13.5px">SUCLG2</div>
<div class="row" style="left:608px;top:96px;font-size:13.5px">[SUCLG...</div>
<div class="row" style="left:683px;top:96px;font-size:13.5px">[hsa:88...</div>
<div class="row" style="left:758px;top:96px;font-size:13.5px">#000000</div>
<div class="row" style="left:833px;top:96px;font-size:13.5px;letter-spacing:-0.5px">#BFFFBF</div>
<div class="row" style="left:8px;top:112px;font-size:13.5px">path:h...</div>
<div class="row" style="left:83px;top:112px;font-size:13.5px">path:h...</div>
<div class="row" style="left:158px;top:112px;font-size:13.5px">718</div>
<div class="row" style="left:233px;top:112px;font-size:13.5px">505</div>
<div class="row" style="left:308px;top:112px;font-size:13.5px">46</div>
<div class="row" style="left:383px;top:112px;font-size:13.5px">17</div>
<div class="row" style="left:458px;top:112px;font-size:13.5px">IDH1, ...</div>
<div class="row" style="left:533px;top:112px;font-size:13.5px">IDH1</div>
<div class="row" style="left:608px;top:112px;font-size:13.5px">[IDH1, ...</div>
<div class="row" style="left:683px;top:112px;font-size:13.5px">[hsa:34...</div>
<div class="row" style="left:758px;top:112px;font-size:13.5px">#000000</div>
<div class="row" style="left:833px;top:112px;font-size:13.5px;letter-spacing:-0.5px">#BFFFBF</div>
<div class="row" style="left:8px;top:128px;font-size:13.5px">path:h...</div>
<div class="row" style="left:83px;top:128px;font-size:13.5px">path:h...</div>
<div class="row" style="left:158px;top:128px;font-size:13.5px">766</div>
<div class="row" style="left:233px;top:128px;font-size:13.5px">458</div>
<div class="row" style="left:308px;top:128px;font-size:13.5px">46</div>
<div class="row" style="left:383px;top:128px;font-size:13.5px">17</div>
<div class="row" style="left:458px;top:128px;font-size:13.5px">IDH3A...</div>
<div class="row" style="left:533px;top:128px;font-size:13.5px">IDH3A</div>
<div class="row" style="left:608px;top:128px;font-size:13.5px">[IDH3A...</div>
<div class="row" style="left:683px;top:128px;font-size:13.5px">[hsa:34...</div>
<div class="row" style="left:758px;top:128px;font-size:13.5px">#000000</div>
<div class="row" style="left:833px;top:128px;font-size:13.5px;letter-spacing:-0.5px">#BFFFBF</div>
</div>
<div class="abs" style="left:1273px;top:627px;width:16px;height:135px;background:linear-gradient(90deg,#f2f2f2,#fdfdfd)"></div>
<div class="abs" style="left:1277px;top:628px;width:8px;height:18px;border-radius:4px;background:#bcbcbc"></div>
<div class="abs" style="left:417px;top:762px;width:872px;height:12px;background:linear-gradient(#f0f0f0,#fcfcfc)"></div>
<div class="abs" style="left:419px;top:764px;width:607px;height:8px;border-radius:4px;background:#c0c0c0"></div>
<div class="seg" style="left:705px;top:784px;width:295px;font-size:14.3px"><div class="it sel" style="left:0;width:91px">Node Table</div><div class="it" style="left:91px;width:91px">Edge Table</div><div class="dv" style="left:182px"></div><div class="it" style="left:183px;width:110px">Network Table</div></div>
<div class="abs" style="left:1208px;top:818px;width:84px;height:23px;border:1px solid #a2a2a2;border-radius:4px;background:linear-gradient(#ffffff,#f6f6f6 50%,#ececec);box-shadow:0 1px 1px rgba(0,0,0,.12)"></div>
<div class="abs" style="left:1214px;top:825px;font-size:10px;line-height:13px">Memory: OK</div>
<div class="abs" style="left:1274px;top:824px;width:12px;height:12px;border-radius:50%;background:#2eb82e;border:1px solid #1d8a1d"></div>
</body></html>
